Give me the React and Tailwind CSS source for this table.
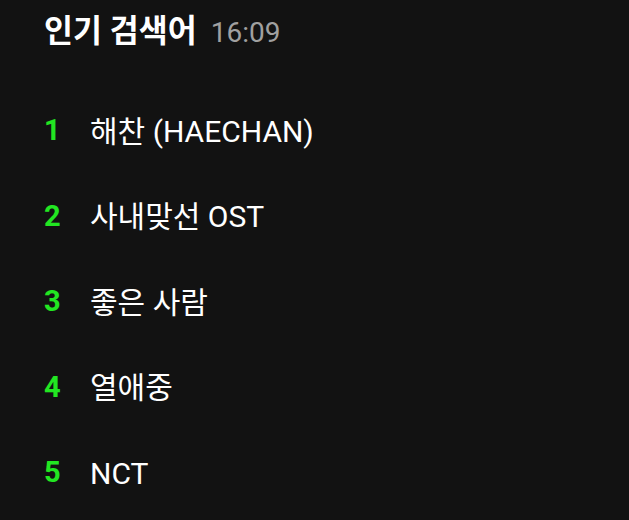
const items = ['해찬 (HAECHAN)', '사내맞선 OST', '좋은 사람', '열애중', 'NCT'];

export default function App() {
  return (
    <div
      className="w-[629px] h-[520px] bg-[#121212] overflow-hidden"
      style={{ fontFamily: 'Roboto, "Noto Sans CJK KR", sans-serif' }}
    >
      <div className="flex items-baseline gap-[14px] pl-[44px] pt-[10px] h-[60px]">
        <h1 className="text-[31.5px] font-bold text-white leading-[44px]">인기 검색어</h1>
        <span className="text-[28px] text-[#a0a0a0] leading-[44px]">16:09</span>
      </div>
      <ul className="pl-[44px] pt-[53px] flex flex-col gap-[49.5px]">
        {items.map((t, i) => (
          <li key={t} className="flex items-center h-[36px]">
            <span className="w-[46px] text-[29px] font-bold text-[#22e622]">{i + 1}</span>
            <span className="text-[30px] text-white">{t}</span>
          </li>
        ))}
      </ul>
    </div>
  );
}
